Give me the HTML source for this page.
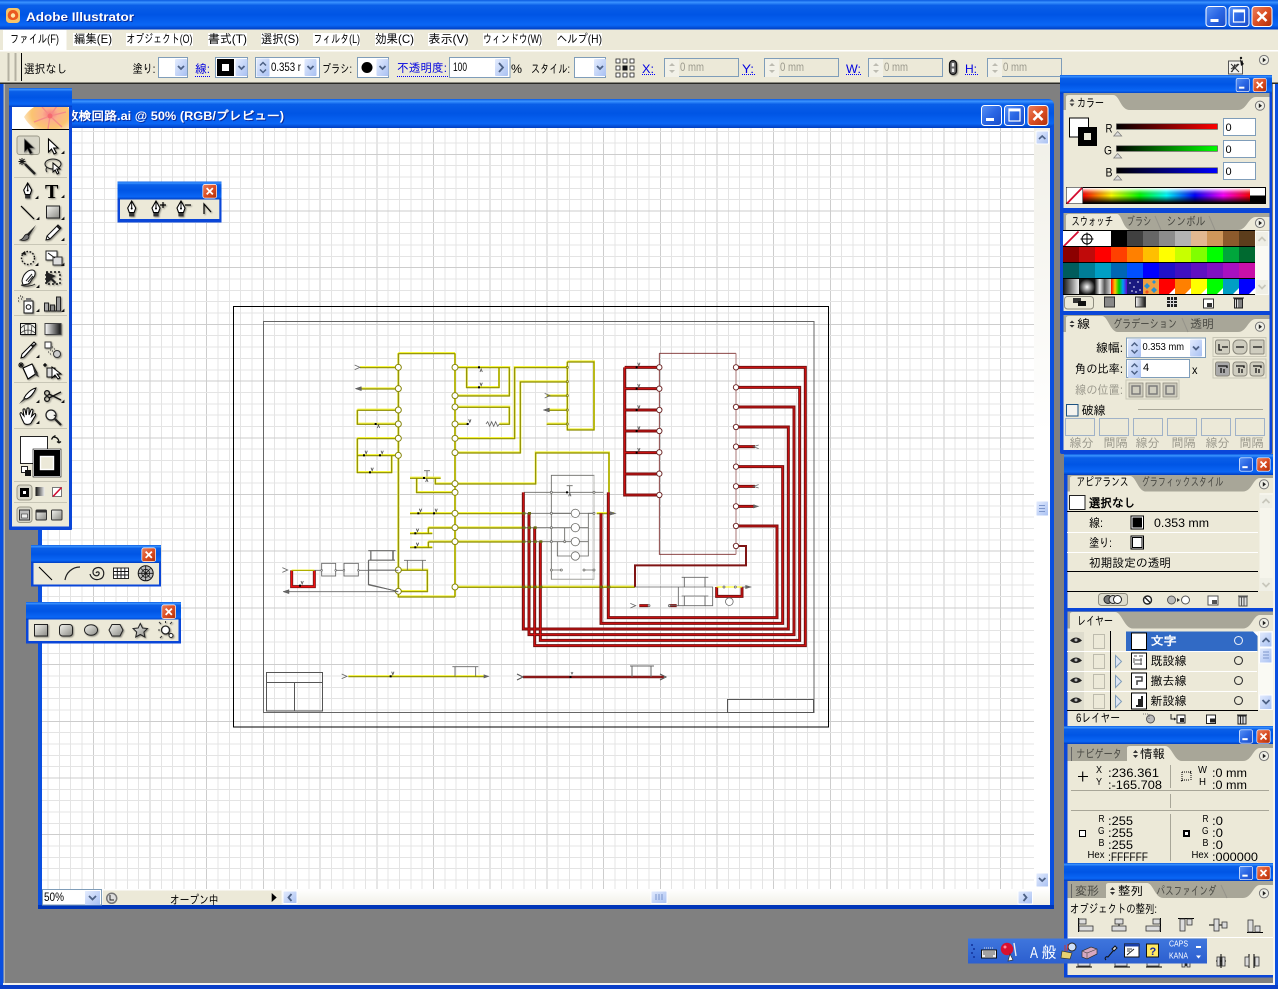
<!DOCTYPE html>
<html lang="ja"><head><meta charset="utf-8"><title>Adobe Illustrator</title>
<style>
html,body{margin:0;padding:0;background:#808080;overflow:hidden}
svg{display:block;position:absolute;left:0;top:0}
text{font-family:"Liberation Sans","IPAGothic","Noto Sans CJK JP",sans-serif;font-size:12px;fill:#000;white-space:pre}
.w{fill:#fff;font-weight:bold;filter:drop-shadow(1px 1px 0 #0a2a9a)}
.b{fill:#0000e0}
.g{fill:#9c9a8e}
.i{fill:#4a4a44}
.d{fill:#111}
.sh{filter:drop-shadow(1px 1px .7px rgba(0,0,0,.4))}
</style></head><body>
<svg width="1278" height="989" viewBox="0 0 1278 989" xmlns="http://www.w3.org/2000/svg">
<defs>
<linearGradient id="tb" x1="0" y1="0" x2="0" y2="1"><stop offset="0" stop-color="#0a5ae0"/><stop offset=".08" stop-color="#3a93ff"/><stop offset=".18" stop-color="#0a5fe8"/><stop offset=".5" stop-color="#0055e5"/><stop offset=".85" stop-color="#0a66f5"/><stop offset="1" stop-color="#003dc0"/></linearGradient>
<linearGradient id="cl" x1="0" y1="0" x2="1" y2="1"><stop offset="0" stop-color="#e9805e"/><stop offset=".5" stop-color="#dc4f24"/><stop offset="1" stop-color="#b02e08"/></linearGradient>
<linearGradient id="mn" x1="0" y1="0" x2="1" y2="1"><stop offset="0" stop-color="#5a93f5"/><stop offset=".5" stop-color="#2a66e4"/><stop offset="1" stop-color="#1a4cc8"/></linearGradient>
<linearGradient id="bb" x1="0" y1="0" x2="1" y2="1"><stop offset="0" stop-color="#e4ecfe"/><stop offset="1" stop-color="#a8c0f2"/></linearGradient>
<linearGradient id="gg" x1="0" y1="0" x2="1" y2="1"><stop offset="0" stop-color="#f4f4f0"/><stop offset="1" stop-color="#8a8a84"/></linearGradient>
<linearGradient id="gh" x1="0" y1="0" x2="1" y2="0"><stop offset="0" stop-color="#fff"/><stop offset="1" stop-color="#111"/></linearGradient>
<linearGradient id="st" x1="0" y1="0" x2="0" y2="1"><stop offset="0" stop-color="#fff"/><stop offset="1" stop-color="#f1f0e8"/></linearGradient>
<linearGradient id="sh" x1="0" y1="0" x2="0" y2="1"><stop offset="0" stop-color="#f1f0e8"/><stop offset=".4" stop-color="#fff"/></linearGradient>
<linearGradient id="rr" x1="0" x2="1"><stop offset="0" stop-color="#000"/><stop offset="1" stop-color="#f00"/></linearGradient>
<linearGradient id="rg" x1="0" x2="1"><stop offset="0" stop-color="#000"/><stop offset="1" stop-color="#0f0"/></linearGradient>
<linearGradient id="rb" x1="0" x2="1"><stop offset="0" stop-color="#000"/><stop offset="1" stop-color="#00f"/></linearGradient>
<linearGradient id="spec" x1="0" x2="1"><stop offset="0" stop-color="#f00"/><stop offset=".17" stop-color="#ff0"/><stop offset=".34" stop-color="#0f0"/><stop offset=".5" stop-color="#0ff"/><stop offset=".67" stop-color="#00f"/><stop offset=".84" stop-color="#f0f"/><stop offset="1" stop-color="#f00"/></linearGradient>
<linearGradient id="specv" x1="0" y1="0" x2="0" y2="1"><stop offset="0" stop-color="#fff"/><stop offset=".2" stop-color="#fff" stop-opacity=".4"/><stop offset=".5" stop-color="#000" stop-opacity="0"/><stop offset="1" stop-color="#000"/></linearGradient>
<linearGradient id="gs" x1="0" x2="1"><stop offset="0" stop-color="#111"/><stop offset="1" stop-color="#eee"/></linearGradient>
<radialGradient id="rgs"><stop offset="0" stop-color="#fff"/><stop offset="1" stop-color="#111"/></radialGradient>
<linearGradient id="met" x1="0" x2="1"><stop offset="0" stop-color="#222"/><stop offset=".3" stop-color="#eee"/><stop offset=".6" stop-color="#555"/><stop offset="1" stop-color="#ddd"/></linearGradient>
<linearGradient id="rain" x1="0" x2="1"><stop offset="0" stop-color="#f00"/><stop offset=".25" stop-color="#fc0"/><stop offset=".5" stop-color="#0c0"/><stop offset=".75" stop-color="#09f"/><stop offset="1" stop-color="#60c"/></linearGradient>
<radialGradient id="fl" cx=".55" cy=".45" r=".6"><stop offset="0" stop-color="#f77a80"/><stop offset=".28" stop-color="#fbb08c"/><stop offset=".65" stop-color="#fbc470"/><stop offset="1" stop-color="#fdebd0"/></radialGradient>
<linearGradient id="lang" x1="0" y1="0" x2="0" y2="1"><stop offset="0" stop-color="#3f76dd"/><stop offset="1" stop-color="#2c5fcf"/></linearGradient>
<clipPath id="cv"><rect x="42" y="128" width="992" height="761"/></clipPath>
<clipPath id="ban"><rect x="12" y="107" width="57" height="22"/></clipPath>

<symbol id="close" viewBox="0 0 21 21"><rect x=".5" y=".5" width="20" height="20" rx="3" fill="url(#cl)" stroke="#fff"/><path d="M6 6L15 15M15 6L6 15" stroke="#fff" stroke-width="2.6"/></symbol>
<symbol id="min" viewBox="0 0 21 21"><rect x=".5" y=".5" width="20" height="20" rx="3" fill="url(#mn)" stroke="#fff"/><rect x="5" y="13" width="8" height="3" fill="#fff"/></symbol>
<symbol id="max" viewBox="0 0 21 21"><rect x=".5" y=".5" width="20" height="20" rx="3" fill="url(#mn)" stroke="#fff"/><rect x="5" y="4" width="11" height="12" fill="none" stroke="#fff" stroke-width="1.2"/><rect x="5" y="4" width="11" height="2.4" fill="#fff"/></symbol>

<g id="dd"><rect width="12" height="17" rx="1" fill="url(#bb)"/><path d="M3 7l3 3 3-3" fill="none" stroke="#4d6185" stroke-width="1.8"/></g>
<g id="sp"><rect width="13" height="18" rx="1" fill="url(#bb)"/><path d="M3.5 7l3-3 3 3M3.5 11l3 3 3-3" fill="none" stroke="#4d6185" stroke-width="1.5"/></g>
<g id="spg"><rect width="14" height="18" fill="#f2f1e8"/><path d="M4 7l3-3 3 3zM4 11l3 3 3-3z" fill="#bdbcb2"/></g>
<g id="circ"><circle r="4.6" fill="#efefe6" stroke="#777"/><path d="M-1.2-2.4L2 0L-1.2 2.4z" fill="#222"/></g>
<path id="tri" d="M0 0h3.4v-3.4z" fill="#111"/>

<g id="pen"><path d="M0-8L4-1 2.4 3.5h-4.8L-4-1z" fill="#fff" stroke="#000" stroke-width="1.1"/><path d="M0-8V-1" stroke="#000"/><circle cy="-.5" r="1" fill="#000"/><rect x="-2.6" y="4" width="5.2" height="3.4" fill="#333"/></g>
<g id="sel"><path d="M-3.5-7V6l3-3 2.6 5 2.2-1.2-2.6-4.8H6z" fill="#000" stroke="#555" stroke-width=".6"/></g>
<g id="sel2"><path d="M-3.5-7V6l3-3 2.6 5 2.2-1.2-2.6-4.8H6z" fill="#fff" stroke="#000" stroke-width="1.1"/></g>
<g id="i-wand"><path d="M-2-2L8 8" stroke="#222" stroke-width="2.4"/><path d="M-5-8V-1M-8.5-4.5H-1.5M-7.5-7L-2.5-2M-2.5-7L-7.5-2" stroke="#111" stroke-width=".9"/></g>
<g id="i-lasso"><ellipse cx="0" cy="-2" rx="8" ry="5" fill="none" stroke="#222" stroke-width="1.1"/><path d="M-6 1q-2 3 0 5" fill="none" stroke="#222"/><path d="M0-3V6l2.2-2 2 4 1.6-1-2-4H7z" fill="#fff" stroke="#000"/></g>
<g id="i-brush"><path d="M8-8L-1 1 1 3z" fill="#222"/><path d="M-1 1C-5 2-3 5-8 7-3 8 1 7 1 3z" fill="#777" stroke="#111" stroke-width=".7"/></g>
<g id="i-pencil"><path d="M5-8L8-5-3 6-7 7-6 3z" fill="#fff" stroke="#111"/><path d="M-6 3L-3 6" stroke="#111"/><path d="M4-7L7-4" stroke="#111" stroke-width="1.6"/></g>
<g id="i-rot"><circle r="6.5" fill="none" stroke="#111" stroke-width="1.4" stroke-dasharray="1.6 1.6"/><path d="M-7-4L-3-7-2-3z" fill="#111"/></g>
<g id="i-scale"><rect x="-8" y="-7" width="11" height="9" fill="#fff" stroke="#222"/><rect x="-1" y="-1" width="9" height="8" fill="#ddd" stroke="#333"/><path d="M-6-5L1 0" stroke="#111"/></g>
<g id="i-warp"><path d="M-7 3C-6-4-1-8 3-8 7-8 7-3 4 0 1 3 2 5-1 6L-6 7z" fill="#fff" stroke="#111"/><path d="M-3 3L3-4M-1 4L4-2M-8 7C-3 9 3 8 6 6" fill="none" stroke="#222"/></g>
<g id="i-free"><rect x="-7" y="-6" width="14" height="12" fill="none" stroke="#111" stroke-width="1.4" stroke-dasharray="2 2"/><path d="M-7-6V6L-2 2 2 6 3 4-1 0 3-2z" fill="#222"/></g>
<g id="i-spray"><rect x="-4" y="-3" width="9" height="12" fill="#fff" stroke="#111"/><circle cx=".5" cy="3" r="2.3" fill="none" stroke="#111"/><rect x="-2" y="-6" width="5" height="3" fill="#777"/><path d="M-10-6h1M-8-8h1M-7-5h1M-10-3h1M-6-7h1" stroke="#111"/></g>
<g id="i-graph"><path d="M-8 7H8" stroke="#111"/><rect x="-8" y="-1" width="4" height="8" fill="#aaa" stroke="#222"/><rect x="-2" y="1" width="4" height="6" fill="#888" stroke="#222"/><rect x="4" y="-7" width="4" height="14" fill="#999" stroke="#222"/></g>
<g id="i-mesh"><rect x="-7.5" y="-5.5" width="15" height="11" fill="#f3f3ec" stroke="#111"/><path d="M-7-1C-3-6 3-6 7-1M-7 4C-3 0 3 0 7 4M0-5V5M-4-4L-3 5M4-4L3 5" fill="none" stroke="#333" stroke-width=".8"/></g>
<g id="i-grad"><rect x="-8" y="-5.5" width="16" height="11" fill="url(#gh)" stroke="#444"/></g>
<g id="i-eye"><path d="M6-8L8-6 5-3 3-5zM3-5L5-3-4 7-7 8-6 4z" fill="#fff" stroke="#000"/><path d="M3-5L8-6 5-3z" fill="#222"/></g>
<g id="i-blend"><rect x="-8" y="-8" width="6" height="6" fill="#fff" stroke="#333"/><circle cx="4" cy="4" r="3.5" fill="#ccc" stroke="#333"/><path d="M-3 0h1M-1-3h1M-1 1h1M1-1h1M-5 2h1M-3 4h1" stroke="#333"/></g>
<g id="i-bucket"><path d="M-5-3L4-7 9 2 0 8z" fill="#fff" stroke="#000" stroke-width="1.2"/><path d="M4-7L9 2 11 6 7 4z" fill="#333"/><path d="M-7-9V-3M-10-6H-4M-9-8L-5-4M-5-8L-9-4" stroke="#111"/></g>
<g id="i-lsel"><path d="M-6-3H2V6H-6z" fill="#ddd" stroke="#111"/><path d="M-1-4V7L2 4 5 8 7 7 4 3H8z" fill="#fff" stroke="#000"/><path d="M-8-8V-4M-10-6H-6M-9-7L-7-5M-7-7L-9-5" stroke="#111"/></g>
<g id="i-slice"><path d="M8-8C3-7-2-2-4 2L-2 3C2 2 6-3 8-8z" fill="#fff" stroke="#000"/><path d="M-4 2L-9 8-2 3z" fill="#333"/></g>
<g id="i-sci"><circle cx="-6" cy="-3" r="2.4" fill="none" stroke="#111" stroke-width="1.3"/><circle cx="-6" cy="3" r="2.4" fill="none" stroke="#111" stroke-width="1.3"/><path d="M-4-2L8 4M-4 2L8-4" stroke="#111" stroke-width="1.3"/></g>
<g id="i-hand"><path d="M-6 2L-8-3C-8-4.500-6.500-5-6-3.500L-4-1-5-7C-5-8.500-3-8.500-3-7L-1.800-2-1-8C-1-9.500 1-9.500 1-8L1-2 3-7C3.500-8.500 5-8 5-6.500L3.500-.5 6-3C7.500-4 8-3 7.500-1.500L3 6C2 7.500-3 8-4 6z" fill="#fff" stroke="#000"/></g>
<g id="i-zoom"><circle cx="-2" cy="-2" r="5" fill="#f4f4ee" stroke="#222" stroke-width="1.3"/><path d="M2-2L1.500-1M2 2L8 8" stroke="#222" stroke-width="2.2"/></g>

<g id="vt" stroke="#e4e4e4"><path d="M11.340 0V770M22.680 0V770M34.020 0V770M45.360 0V770"/><path d="M0 0V770" stroke="#cdcdcd"/></g>
<g id="ht" stroke="#e4e4e4"><path d="M0 11.340H1000M0 22.680H1000M0 34.020H1000M0 45.360H1000"/><path d="M0 0H1000" stroke="#cdcdcd"/></g>
<g id="sw"><rect x="-3" y="-3" width="6" height="6" fill="#000"/><path d="M3-14l3.500 9 3.500-9" fill="none" stroke="#555" stroke-width="2.500"/></g>
<g id="swu"><rect x="-3" y="-3" width="6" height="6" fill="#000"/><path d="M5 12l3.500-9 3.500 9" fill="none" stroke="#555" stroke-width="2.500"/></g>
<path id="tY" d="M0-7L16 0 0 7" fill="none" stroke="#666" stroke-width="2.400"/>
<path id="tA" d="M16-6L-2 0 16 6z" fill="#666" stroke="#555" stroke-width="1.500"/>

<path id="yp" fill="none" d="M175 40H345M175 40V770H345M345 40V770M60 82H175M60 146H175M52 210H175M52 210V252H175M52 295H175M52 295V397H155V346M52 346H175M345 82H508V167H345M380 82V142H477V82M345 201H508V252H478M383 252H345M345 295H524V82H682M345 338H541V125H682M682 65H762V269H682V65M620 167H682M620 210H682M620 252H682M345 431H587V338H807V457M345 457H230V414M210 414H302M345 431H286V414M210 520H552M265 563H552M265 563V580M210 580H277M265 605H552M265 605V622M210 622H277M345 741H885M770 520H822"/>
<path id="yp2" fill="none" d="M175 690H262V754H175"/>
<path id="rp" fill="none" d="M344 82H448M344 82V465H448M344 146H448M344 210H448M344 273H448M344 338H448M344 402H448M40 457V867H835V261H678M57 520V884H852V201H678M74 563V917H886V82H678M91 605V901H869V142H678M678 380H818V850H273V520M678 558H801V833H295V457M678 320H735M678 439H735M678 499H735M620 741V769H696V741M388 797H415M478 797H500"/>
</defs>

<!-- workspace -->
<rect width="1278" height="989" fill="#808080"/>
<rect x="0" y="0" width="3.500" height="989" fill="#0a4fe0"/>
<rect x="3.500" y="84" width="1.500" height="900" fill="#b8b5a8"/>
<rect x="1275" y="0" width="3" height="989" fill="#0a4fe0"/>
<rect x="1273" y="84" width="2" height="900" fill="#f4f3ee"/>
<rect x="3" y="983" width="1272" height="2" fill="#f4f3ee"/>
<rect x="0" y="985" width="1278" height="4" fill="#0a3fc8"/>

<!-- main title -->
<rect width="1278" height="29.500" fill="url(#tb)"/>
<g transform="translate(5 8)"><rect x="1" y="0" width="14" height="15" rx="3.500" fill="#f8c468"/><path d="M8 2C12 2 14 6 13 9 12 13 4 13 3 9 2 6 4 2 8 2z" fill="#ea5a20"/><circle cx="8" cy="7.500" r="2.200" fill="#ffe9a8"/></g>
<text class="w" x="26" y="21" textLength="108" lengthAdjust="spacingAndGlyphs" font-size="12">Adobe Illustrator</text>
<use href="#min" x="1205.500" y="6" width="21" height="21"/><use href="#max" x="1228.500" y="6" width="21" height="21"/><use href="#close" x="1251.500" y="6" width="21" height="21"/>

<!-- menu -->
<rect y="29.500" width="1278" height="20.500" x="0" fill="#ece9d8"/>
<g fill="#fff"><rect x="3" y="30" width="63.500" height="20"/><rect x="73" y="33" width="39" height="13"/><rect x="126" y="33" width="67" height="13"/><rect x="208" y="33" width="39" height="13"/><rect x="261" y="33" width="38" height="13"/><rect x="313" y="33" width="47" height="13"/><rect x="375" y="33" width="39" height="13"/><rect x="428" y="33" width="40" height="13"/><rect x="483" y="33" width="59" height="13"/><rect x="557" y="33" width="45" height="13"/></g>
<g>
<text x="10" y="43" textLength="49" lengthAdjust="spacingAndGlyphs">ファイル(F)</text>
<text x="74" y="43" textLength="38" lengthAdjust="spacingAndGlyphs">編集(E)</text>
<text x="126.500" y="43" textLength="66" lengthAdjust="spacingAndGlyphs">オブジェクト(O)</text>
<text x="208" y="43" textLength="39" lengthAdjust="spacingAndGlyphs">書式(T)</text>
<text x="261" y="43" textLength="38" lengthAdjust="spacingAndGlyphs">選択(S)</text>
<text x="313.500" y="43" textLength="46.500" lengthAdjust="spacingAndGlyphs">フィルタ(L)</text>
<text x="375" y="43" textLength="39" lengthAdjust="spacingAndGlyphs">効果(C)</text>
<text x="428.500" y="43" textLength="40" lengthAdjust="spacingAndGlyphs">表示(V)</text>
<text x="483" y="43" textLength="59" lengthAdjust="spacingAndGlyphs">ウィンドウ(W)</text>
<text x="557" y="43" textLength="45" lengthAdjust="spacingAndGlyphs">ヘルプ(H)</text>
</g>

<!-- control bar -->
<rect y="50" x="0" width="1278" height="1.500" fill="#fff"/>
<rect y="51.500" x="0" width="1278" height="31.500" fill="#ece9d8"/>
<rect y="82.500" x="0" width="1278" height="1.500" fill="#2a2a26"/>
<rect x="7.500" y="53" width="2" height="28" fill="#b4b1a2"/><rect x="14.500" y="53" width="2" height="28" fill="#b4b1a2"/><rect x="21" y="53" width="1" height="28" fill="#000"/>
<text x="24" y="73" textLength="43" lengthAdjust="spacingAndGlyphs">選択なし</text>
<text x="132.500" y="73" textLength="23" lengthAdjust="spacingAndGlyphs">塗り:</text>
<rect x="158.500" y="57.500" width="29" height="20" fill="#fff" stroke="#7f9db9"/><use href="#dd" x="175" y="59"/>
<text class="b" x="195" y="73" textLength="15" lengthAdjust="spacingAndGlyphs">線:</text><path d="M195 76.500h15" stroke="#00f" stroke-dasharray="1 1"/>
<rect x="215.500" y="57.500" width="32" height="20" fill="#fff" stroke="#7f9db9"/><rect x="217" y="59" width="17" height="17" fill="#000"/><rect x="222" y="64" width="7" height="7" fill="#fff"/><use href="#dd" x="235.500" y="59"/>
<rect x="255.500" y="57.500" width="64" height="20" fill="#fff" stroke="#7f9db9"/><use href="#sp" x="256.500" y="58.500"/><text x="271" y="71" textLength="30" lengthAdjust="spacingAndGlyphs" font-size="11">0.353 r</text><use href="#dd" x="304.500" y="59"/>
<text x="322" y="73" textLength="30" lengthAdjust="spacingAndGlyphs">ブラシ:</text>
<rect x="357.500" y="57.500" width="31" height="20" fill="#fff" stroke="#7f9db9"/><circle cx="367" cy="67.500" r="5.500" fill="#000"/><use href="#dd" x="376.500" y="59"/>
<text class="b" x="397" y="72" textLength="50" lengthAdjust="spacingAndGlyphs">不透明度:</text><path d="M397 76.500h51" stroke="#00f" stroke-dasharray="1 1"/>
<rect x="449.500" y="57.500" width="60.500" height="20" fill="#fff" stroke="#7f9db9"/><text x="453" y="71" textLength="14" lengthAdjust="spacingAndGlyphs" font-size="11">100</text>
<rect x="495" y="59" width="13" height="17" rx="1" fill="url(#bb)"/><path d="M499 63l4 4.500-4 4.500" fill="none" stroke="#4d6185" stroke-width="1.800"/>
<text x="511" y="73" textLength="11" lengthAdjust="spacingAndGlyphs">%</text>
<text x="531" y="73" textLength="39" lengthAdjust="spacingAndGlyphs">スタイル:</text>
<rect x="574.500" y="57.500" width="31" height="20" fill="#fff" stroke="#7f9db9"/><use href="#dd" x="594" y="59"/>
<g fill="#fff" stroke="#222" stroke-width=".8"><rect x="616" y="59" width="4" height="4"/><rect x="623" y="59" width="4" height="4"/><rect x="630" y="59" width="4" height="4"/><rect x="616" y="66" width="4" height="4"/><rect x="630" y="66" width="4" height="4"/><rect x="616" y="73" width="4" height="4"/><rect x="623" y="73" width="4" height="4"/><rect x="630" y="73" width="4" height="4"/></g><rect x="622.500" y="65.500" width="5" height="5" fill="#111"/>
<g>
<text class="b" x="642" y="73" textLength="12" lengthAdjust="spacingAndGlyphs">X:</text><path d="M642 74.500h13" stroke="#00f" stroke-dasharray="1 1"/>
<rect x="664.500" y="58.500" width="74" height="18" fill="#ece9d8" stroke="#7f9db9"/><use href="#spg" x="665" y="59"/><text class="g" x="680" y="71" textLength="24" lengthAdjust="spacingAndGlyphs" font-size="10">0 mm</text>
<text class="b" x="742" y="73" textLength="12" lengthAdjust="spacingAndGlyphs">Y:</text><path d="M742 74.500h13" stroke="#00f" stroke-dasharray="1 1"/>
<rect x="764.500" y="58.500" width="74" height="18" fill="#ece9d8" stroke="#7f9db9"/><use href="#spg" x="765" y="59"/><text class="g" x="780" y="71" textLength="24" lengthAdjust="spacingAndGlyphs" font-size="10">0 mm</text>
<text class="b" x="846" y="73" textLength="15" lengthAdjust="spacingAndGlyphs">W:</text><path d="M846 74.500h16" stroke="#00f" stroke-dasharray="1 1"/>
<rect x="868.500" y="58.500" width="74" height="18" fill="#ece9d8" stroke="#7f9db9"/><use href="#spg" x="869" y="59"/><text class="g" x="884" y="71" textLength="24" lengthAdjust="spacingAndGlyphs" font-size="10">0 mm</text>
<g class="sh"><rect x="949.500" y="60.500" width="7" height="14" rx="3.500" fill="#666" stroke="#111" stroke-width="1.200"/><rect x="951.800" y="63" width="2.400" height="3.500" fill="#eee"/><rect x="951.800" y="68.500" width="2.400" height="3.500" fill="#eee"/></g>
<text class="b" x="965" y="73" textLength="12" lengthAdjust="spacingAndGlyphs">H:</text><path d="M965 74.500h13" stroke="#00f" stroke-dasharray="1 1"/>
<rect x="987.500" y="58.500" width="74" height="18" fill="#ece9d8" stroke="#7f9db9"/><use href="#spg" x="988" y="59"/><text class="g" x="1003" y="71" textLength="24" lengthAdjust="spacingAndGlyphs" font-size="10">0 mm</text>
</g>
<g transform="translate(1236 67)"><rect x="-7.500" y="-6" width="14" height="13" fill="#f4f3ee" stroke="#555"/><path d="M-5-3L3 5M3-3L-5 5M-1-3L-4 5M-5 2L2-3" stroke="#333"/><path d="M4-8l4 5-3 2z" fill="#111"/><circle cx="5" cy="-9" r="1.200" fill="#111"/></g>
<use href="#circ" x="1264" y="60"/>

<!-- document window -->
<path d="M38 909V106Q38 99 45 99H1047Q1054 99 1054 106V909z" fill="#0a4fe0"/>
<rect x="38" y="99" width="1016" height="29" rx="6" fill="url(#tb)"/>
<rect x="38" y="905" width="1016" height="4" fill="#0036b8"/>
<rect x="42" y="128" width="1008" height="777" fill="#fff"/>
<g clip-path="url(#cv)" shape-rendering="crispEdges">
<use href="#vt" x="36.600" y="128"/><use href="#vt" x="93.300" y="128"/><use href="#vt" x="150" y="128"/><use href="#vt" x="206.700" y="128"/><use href="#vt" x="263.400" y="128"/><use href="#vt" x="320.100" y="128"/><use href="#vt" x="376.800" y="128"/><use href="#vt" x="433.500" y="128"/><use href="#vt" x="490.200" y="128"/><use href="#vt" x="546.900" y="128"/><use href="#vt" x="603.600" y="128"/><use href="#vt" x="660.300" y="128"/><use href="#vt" x="717" y="128"/><use href="#vt" x="773.700" y="128"/><use href="#vt" x="830.400" y="128"/><use href="#vt" x="887.100" y="128"/><use href="#vt" x="943.800" y="128"/><use href="#vt" x="1000.500" y="128"/>
<use href="#ht" x="42" y="97.600"/><use href="#ht" x="42" y="154.300"/><use href="#ht" x="42" y="211"/><use href="#ht" x="42" y="267.700"/><use href="#ht" x="42" y="324.400"/><use href="#ht" x="42" y="381.100"/><use href="#ht" x="42" y="437.800"/><use href="#ht" x="42" y="494.500"/><use href="#ht" x="42" y="551.200"/><use href="#ht" x="42" y="607.900"/><use href="#ht" x="42" y="664.600"/><use href="#ht" x="42" y="721.300"/><use href="#ht" x="42" y="778"/><use href="#ht" x="42" y="834.700"/>
</g>
<text class="w" x="66" y="120" textLength="218" lengthAdjust="spacingAndGlyphs" font-size="13">改検回路.ai @ 50% (RGB/プレビュー)</text>
<use href="#min" x="981" y="105" width="21" height="21"/><use href="#max" x="1004" y="105" width="21" height="21"/><use href="#close" x="1027.500" y="105" width="21" height="21"/>

<!-- drawing sheet -->
<rect x="233.500" y="306.500" width="595" height="420.500" fill="none" stroke="#000"/>
<rect x="263.500" y="321.500" width="550.500" height="391" fill="none" stroke="#666"/>
<g fill="none" stroke="#555"><rect x="266.500" y="672.500" width="56" height="38.500"/><path d="M266.500 682.500h56M294.500 682.500V711"/><rect x="727.500" y="699.500" width="86" height="13"/></g>

<!-- yellow schematic -->
<g transform="translate(340 340) scale(.33333)">
<use href="#yp" stroke="#f4f43a" stroke-width="6" transform="translate(0 -1)"/>
<use href="#yp" stroke="#8c8c00" stroke-width="3.400" transform="translate(0 1)"/>
<use href="#yp2" stroke="#f4f43a" stroke-width="6" transform="translate(0 -1)"/>
<use href="#yp2" stroke="#8c8c00" stroke-width="3.400" transform="translate(0 1)"/>
<g fill="none" stroke="#6a6a66" stroke-width="2.600">
<path d="M552 457H790M552 520H760M552 563H634M552 605H634M634 406H762V718H634zM85 735L175 754M85 661V735M85 661H165M85 690H175M92 632V661M158 632V661M85 632H165M202 661V690M248 661V690M192 661H258"/>
<path d="M762 520H745V648H718M718 563H745M718 605H745M634 520H694M652 605V648H694M652 605H694M674 563V605M634 563H694M634 605H652M634 690H664M732 690H762"/>
<path d="M680 437H698M689 437V455"/>
<path d="M252 392H270M261 392V410"/>
</g>
<g stroke="#b8b8b4" stroke-width="3" fill="none"><path d="M762 406V718H634"/></g>
<g fill="#fff" stroke="#6e6e6a" stroke-width="2.400"><circle cx="706" cy="520" r="12.500"/><circle cx="706" cy="563" r="12.500"/><circle cx="706" cy="605" r="12.500"/><circle cx="706" cy="648" r="12.500"/><circle cx="634" cy="457" r="3"/><circle cx="634" cy="520" r="3"/><circle cx="634" cy="563" r="3"/><circle cx="634" cy="605" r="3"/><circle cx="634" cy="690" r="3"/><circle cx="664" cy="690" r="3"/><circle cx="732" cy="690" r="3"/><circle cx="762" cy="690" r="3"/><circle cx="762" cy="457" r="3"/><circle cx="762" cy="520" r="3"/><circle cx="674" cy="605" r="3"/></g>
<use href="#sw" transform="translate(417 82) scale(1 -1)"/><use href="#sw" x="417" y="142"/><use href="#sw" x="383" y="252"/><use href="#swu" x="107" y="252"/><use href="#sw" x="72" y="346"/><use href="#sw" x="120" y="346"/><use href="#sw" x="90" y="397"/><use href="#sw" x="235" y="520"/><use href="#sw" x="282" y="520"/><use href="#sw" x="226" y="580"/><use href="#sw" x="226" y="622"/><use href="#swu" x="252" y="414"/><use href="#swu" x="681" y="457"/>
<use href="#tY" x="44" y="82"/><use href="#tA" x="48" y="146"/><use href="#tY" x="614" y="167"/><use href="#tA" x="612" y="210"/>
<path d="M438 252l5-7 6 14 6-14 6 14 6-14 6 14 5-7" fill="none" stroke="#666" stroke-width="2.400"/>
</g>

<!-- red schematic -->
<g transform="translate(510 340) scale(.33333)">
<path d="M448 40H678M448 40V643H678" fill="none" stroke="#7a2a2a" stroke-width="2.600"/>
<path d="M678 40V643" fill="none" stroke="#b58a8a" stroke-width="3.500"/>
<use href="#rp" stroke="#741212" stroke-width="9"/>
<use href="#rp" stroke="#e80f0f" stroke-width="2.600"/>
<path d="M678 618H708V676H375V741" fill="none" stroke="#801414" stroke-width="6"/>
<path d="M620 741H696" stroke="#ff0" stroke-width="3"/>
<g fill="none" stroke="#666" stroke-width="2.600"><path d="M375 741H608V797H478M505 741V797M523 712V742M585 712V742M523 768V797M585 768V797M515 712H595M515 768H595M696 741H722"/></g>
<g fill="#fff" stroke="#666" stroke-width="2.400"><circle cx="658" cy="785" r="11.500"/><circle cx="642" cy="741" r="3"/><circle cx="676" cy="741" r="3"/><circle cx="417" cy="797" r="3"/><circle cx="478" cy="797" r="3"/></g>
<use href="#tY" x="361" y="797"/><path d="M706 735L726 741 706 747z" fill="#666"/><path d="M300 514L320 520 300 526z" fill="#666"/>
<path d="M746 315L730 320 746 326M746 434L730 439 746 444" fill="none" stroke="#666" stroke-width="2.400"/><path d="M730 493L748 499 730 505z" fill="#666"/>
<g fill="#fff" stroke="#6a2222" stroke-width="2.800"><circle cx="448" cy="82" r="8"/><circle cx="448" cy="146" r="8"/><circle cx="448" cy="210" r="8"/><circle cx="448" cy="273" r="8"/><circle cx="448" cy="337" r="8"/><circle cx="448" cy="401" r="8"/><circle cx="448" cy="465" r="8"/><circle cx="678" cy="82" r="8"/><circle cx="678" cy="142" r="8"/><circle cx="678" cy="201" r="8"/><circle cx="678" cy="261" r="8"/><circle cx="678" cy="320" r="8"/><circle cx="678" cy="380" r="8"/><circle cx="678" cy="439" r="8"/><circle cx="678" cy="499" r="8"/><circle cx="678" cy="558" r="8"/><circle cx="678" cy="618" r="8"/></g>
<use href="#sw" x="380" y="82"/><use href="#sw" x="380" y="146"/><use href="#sw" x="380" y="210"/><use href="#sw" x="380" y="273"/><use href="#sw" x="380" y="338"/>
<g fill="#6a6a10"><rect x="37" y="516" width="9" height="8"/><rect x="54" y="516" width="9" height="8"/><rect x="37" y="559" width="9" height="8"/><rect x="54" y="559" width="9" height="8"/><rect x="71" y="559" width="9" height="8"/><rect x="37" y="601" width="9" height="8"/><rect x="54" y="601" width="9" height="8"/><rect x="71" y="601" width="9" height="8"/><rect x="88" y="601" width="9" height="8"/><rect x="37" y="737" width="9" height="8"/><rect x="54" y="737" width="9" height="8"/><rect x="71" y="737" width="9" height="8"/><rect x="88" y="737" width="9" height="8"/><rect x="270" y="737" width="9" height="8"/><rect x="292" y="737" width="9" height="8"/></g>
</g>

<g transform="translate(340 340) scale(.33333)" fill="#fff" stroke="#85850a" stroke-width="3"><circle cx="175" cy="82" r="9"/><circle cx="175" cy="146" r="9"/><circle cx="175" cy="210" r="9"/><circle cx="175" cy="252" r="9"/><circle cx="175" cy="295" r="9"/><circle cx="175" cy="346" r="9"/><circle cx="175" cy="690" r="9"/><circle cx="175" cy="754" r="9"/><circle cx="345" cy="82" r="9"/><circle cx="345" cy="167" r="9"/><circle cx="345" cy="201" r="9"/><circle cx="345" cy="252" r="9"/><circle cx="345" cy="295" r="9"/><circle cx="345" cy="338" r="9"/><circle cx="345" cy="431" r="9"/><circle cx="345" cy="457" r="9"/><circle cx="345" cy="520" r="9"/><circle cx="345" cy="563" r="9"/><circle cx="345" cy="605" r="9"/><circle cx="345" cy="741" r="9"/><circle cx="682" cy="82" r="3"/><circle cx="682" cy="125" r="3"/><circle cx="682" cy="167" r="3"/><circle cx="682" cy="210" r="3"/><circle cx="682" cy="252" r="3"/></g>

<!-- lower-left schematic -->
<g transform="translate(225 540) scale(.33333)">
<path d="M200 91V140H268V91" fill="none" stroke="#7a1414" stroke-width="9"/><path d="M200 91V140H268V91" fill="none" stroke="#ee0f0f" stroke-width="4"/>
<path d="M200 91H268" stroke="#e8e800" stroke-width="4"/><path d="M200 92H268" stroke="#8c8c00" stroke-width="2"/>
<g fill="none" stroke="#666" stroke-width="2.600"><path d="M190 155H520M268 91H290M332 91H357M400 91H520M431 60V133L520 155M431 60H510M438 32V60M505 32V60M430 32H512"/><rect x="290" y="70" width="42" height="38"/><rect x="357" y="70" width="43" height="38"/></g>
<use href="#tY" x="172" y="90"/><use href="#tA" x="176" y="155"/><use href="#sw" x="225" y="137"/>
<g fill="#fff" stroke="#666" stroke-width="2"><circle cx="290" cy="91" r="2.500"/><circle cx="332" cy="91" r="2.500"/><circle cx="357" cy="91" r="2.500"/><circle cx="400" cy="91" r="2.500"/></g>
<path d="M370 409H780" fill="none" stroke="#f4f43a" stroke-width="5" transform="translate(0 -1)"/><path d="M370 409H780" fill="none" stroke="#8c8c00" stroke-width="3.400" transform="translate(0 1)"/>
<path d="M682 380H760M690 380V409M752 380V409" fill="none" stroke="#666" stroke-width="2.600"/>
<use href="#tY" x="350" y="409"/><path d="M776 403L794 409 776 415z" fill="#666"/><use href="#sw" x="497" y="409"/>
</g>
<path d="M523 677H664" stroke="#6a1414" stroke-width="2.400"/><path d="M523 677H664" stroke="#c02020" stroke-width=".8"/>
<path d="M517 674l6 3-6 3M660 674l6 3-6 3" fill="none" stroke="#555"/>
<path d="M630 666H654M632 666V677M651 666V677" fill="none" stroke="#666"/><rect x="569.500" y="676" width="2" height="2" fill="#000"/><path d="M571 672l1 2 1-2" fill="none" stroke="#555" stroke-width=".8"/>

<!-- scrollbars + status -->
<rect x="1034" y="128" width="16" height="761" fill="url(#sh)"/>
<rect x="42" y="889" width="1008" height="16" fill="url(#st)"/>
<rect x="1036" y="131" width="12.500" height="13" rx="1" fill="url(#bb)" stroke="#fff"/><path d="M1039 139l3.200-3 3.200 3" fill="none" stroke="#4d6185" stroke-width="1.600"/>
<rect x="1036" y="873" width="12.500" height="14" rx="1" fill="url(#bb)" stroke="#fff"/><path d="M1039 878l3.200 3 3.200-3" fill="none" stroke="#4d6185" stroke-width="1.800"/>
<rect x="1036" y="501" width="12.500" height="15" rx="1" fill="url(#bb)" stroke="#fff"/><path d="M1039 505.500h6M1039 508.500h6M1039 511.500h6" stroke="#7c96cc"/>
<rect x="1018" y="891" width="14.500" height="13" rx="1" fill="url(#bb)" stroke="#fff"/><path d="M1023.500 894l3 3.500-3 3.500" fill="none" stroke="#4d6185" stroke-width="1.800"/>
<rect x="283" y="891" width="14" height="12.500" rx="1" fill="url(#bb)" stroke="#fff"/><path d="M291.500 894l-3 3.500 3 3.500" fill="none" stroke="#4d6185" stroke-width="1.800"/>
<rect x="651" y="891" width="16" height="12.500" rx="1" fill="url(#bb)" stroke="#fff"/><path d="M656 894v6M659 894v6M662 894v6" stroke="#7c96cc"/>
<rect x="42.500" y="889.500" width="59" height="15.500" fill="#fff" stroke="#7f9db9"/><text x="44" y="901" textLength="20" lengthAdjust="spacingAndGlyphs" font-size="11">50%</text>
<rect x="85" y="891" width="15" height="14" fill="url(#bb)"/><path d="M89 896l3.500 3.500 3.500-3.500" fill="none" stroke="#4d6185" stroke-width="1.800"/>
<rect x="103" y="890.500" width="178.500" height="14.500" fill="#ece9d8"/>
<circle cx="111.700" cy="898.300" r="5" fill="#ddd" stroke="#777" stroke-width="1.500"/><path d="M110 895v5h4" fill="none" stroke="#222"/>
<text x="170" y="904" textLength="48.500" lengthAdjust="spacingAndGlyphs">オープン中</text>
<path d="M271.700 893l5 4.500-5 4.500z" fill="#000"/>

<!-- toolbox -->
<rect x="9" y="88" width="63" height="442" fill="#0a46d8" rx="1"/>
<rect x="9" y="88" width="63" height="19" fill="url(#tb)"/>
<rect x="12" y="107" width="57" height="22" fill="#fff"/>
<g clip-path="url(#ban)"><path d="M24 117C30 108 36 106 40 104L50 98 62 102C72 106 74 122 68 130L56 134 42 132C34 130 28 124 24 117z" fill="url(#fl)"/><path d="M50 116L42 107M50 116L57 106M50 116L66 112M50 116L62 127M50 116L48 129M50 116L34 122" stroke="#f58a88" stroke-width="1.300"/><circle cx="50" cy="116" r="2.500" fill="#f66a70"/></g>
<rect x="12" y="129" width="57" height="1" fill="#000"/>
<rect x="12" y="130" width="57" height="396.500" fill="#ece9d8"/>
<g fill="#c8c6b6"><rect x="14" y="177" width="53" height="1"/><rect x="14" y="244" width="53" height="1"/><rect x="14" y="290" width="53" height="1"/><rect x="14" y="315" width="53" height="1"/><rect x="14" y="382" width="53" height="1"/><rect x="14" y="428" width="53" height="1"/><rect x="14" y="481" width="53" height="1"/><rect x="14" y="502" width="53" height="1"/></g>
<rect x="17" y="136" width="22.500" height="18.500" rx="2.500" fill="#d8d6c8" stroke="#9a9888"/>
<g class="sh">
<use href="#sel" x="28" y="146"/><use href="#sel2" x="52" y="146"/>
<use href="#i-wand" x="27" y="166"/><use href="#i-lasso" x="53" y="166"/>
<use href="#pen" x="27.700" y="191"/><text x="45" y="198" style="font-family:'Liberation Serif',serif;font-size:20px;font-weight:bold">T</text>
<path d="M21 206L34 219" stroke="#000" stroke-width="1.200"/><rect x="46.500" y="206" width="13" height="12" fill="url(#gg)" stroke="#222"/>
<use href="#i-brush" x="28" y="233"/><use href="#i-pencil" x="53" y="233"/>
<use href="#i-rot" x="28" y="258"/><use href="#i-scale" x="54" y="258"/>
<use href="#i-warp" x="29" y="278"/><use href="#i-free" x="53" y="278"/>
<use href="#i-spray" x="28" y="304"/><use href="#i-graph" x="52.500" y="304"/>
<use href="#i-mesh" x="28" y="329"/><use href="#i-grad" x="53" y="329"/>
<use href="#i-eye" x="28" y="350"/><use href="#i-blend" x="53" y="350"/>
<use href="#i-bucket" x="28" y="371"/><use href="#i-lsel" x="53" y="371"/>
<use href="#i-slice" x="28" y="396"/><use href="#i-sci" x="53" y="396"/>
<use href="#i-hand" x="28" y="417"/><use href="#i-zoom" x="53" y="417"/>
</g>
<use href="#tri" x="61" y="154"/><use href="#tri" x="61" y="198"/><use href="#tri" x="35" y="199"/><use href="#tri" x="36" y="220"/><use href="#tri" x="61" y="220"/><use href="#tri" x="61" y="241"/><use href="#tri" x="35" y="266"/><use href="#tri" x="61" y="266"/><use href="#tri" x="36" y="288"/><use href="#tri" x="36" y="312"/><use href="#tri" x="61" y="312"/><use href="#tri" x="36" y="358"/><use href="#tri" x="36" y="403"/><use href="#tri" x="61" y="403"/><use href="#tri" x="36" y="424"/>
<rect x="20.500" y="436.500" width="27" height="27" fill="#fff" stroke="#222"/>
<rect x="33.500" y="449.500" width="27" height="27" fill="#000" stroke="#fff" stroke-width="1"/><rect x="33" y="449" width="28" height="28" fill="none" stroke="#000" stroke-width=".6"/><rect x="40.500" y="456.500" width="13" height="13" fill="#ece9d8" stroke="#fff" stroke-width="1.400"/>
<path d="M53 437l-1.500 2.500M53 437q6 0 6 6M59 443l-2-1.500M59 443l2-1.500M53 437l2.500-1.500" fill="none" stroke="#111" stroke-width="1.300"/>
<rect x="21.500" y="466.500" width="6" height="6" fill="#fff" stroke="#222"/><rect x="25" y="470" width="6" height="6" fill="#111"/>
<rect x="17" y="485" width="15" height="15" rx="3" fill="#d8d6c8" stroke="#9a9888"/><rect x="20" y="488" width="9" height="9" fill="#000"/><rect x="23" y="491" width="3" height="3" fill="#fff"/>
<rect x="35.500" y="487" width="9" height="9" fill="url(#gs)"/>
<rect x="52.500" y="487.500" width="9" height="9" fill="#fff" stroke="#777"/><path d="M53 496.500L61.500 487.500" stroke="#d40c30" stroke-width="1.600"/>
<rect x="17" y="507" width="15" height="15.500" rx="3" fill="#d8d6c8" stroke="#9a9888"/><rect x="19.500" y="510" width="10" height="10" fill="#bbb" stroke="#333"/><rect x="21.500" y="514" width="6" height="4" fill="#eee" stroke="#333" stroke-width=".6"/>
<rect x="36" y="510" width="10.500" height="10" rx="1" fill="url(#gg)" stroke="#333"/><rect x="36" y="510" width="10.500" height="2.500" fill="#333"/>
<rect x="51.500" y="510" width="10.500" height="10" rx="1" fill="url(#gg)" stroke="#333"/>

<!-- pen palette -->
<rect x="117.500" y="181.500" width="104" height="41" fill="#0a46d8"/><rect x="117.500" y="181.500" width="104" height="18" fill="url(#tb)"/><rect x="120" y="199.500" width="99.300" height="19.500" fill="#ece9d8"/>
<use href="#close" x="202.500" y="184" width="14.500" height="14.500"/>
<g class="sh"><use href="#pen" x="131.700" y="209"/><use href="#pen" x="156" y="209"/><path d="M160 205h6M163 202v6" stroke="#000" stroke-width="1.200"/><use href="#pen" x="181" y="209"/><path d="M185 205h6" stroke="#000" stroke-width="1.200"/>
<path d="M204 214V204L211 212" fill="none" stroke="#000" stroke-width="1.200"/></g>

<!-- line palette -->
<rect x="31" y="545" width="130" height="41.500" fill="#0a46d8"/><rect x="31" y="545" width="130" height="18" fill="url(#tb)"/><rect x="33.500" y="563" width="125.500" height="21.500" fill="#ece9d8"/>
<use href="#close" x="141.500" y="547.500" width="14.500" height="14.500"/>
<path d="M39 567L52 580" stroke="#000" stroke-width="1.100"/>
<path d="M65 580C66 573 72 567 80 567" fill="none" stroke="#222" stroke-width="1.200"/>
<path d="M96 573c1-2 4-1 3 1-1 3-6 2-6-2 0-4 6-6 9-3 3 3 2 9-2 10-5 2-9-1-10-5" fill="none" stroke="#222" stroke-width="1.200"/>
<g stroke="#111" stroke-width=".9" fill="#fff"><rect x="113.500" y="568" width="15" height="10.500"/><path d="M113.500 571.500h15M113.500 575h15M117.300 568v10.500M121 568v10.500M124.800 568v10.500" fill="none"/></g>
<circle cx="145.700" cy="573.300" r="7.500" fill="#bbb" stroke="#111"/><path d="M138.500 573.300h14.500M145.700 566v14.500M141 568.500l9.500 9.500M150.500 568.500L141 578" stroke="#111" stroke-width=".8"/><circle cx="145.700" cy="573.300" r="4" fill="none" stroke="#111" stroke-width=".8"/>

<!-- shape palette -->
<rect x="26" y="602" width="155" height="41.500" fill="#0a46d8"/><rect x="26" y="602" width="155" height="18" fill="url(#tb)"/><rect x="28.500" y="619.500" width="150" height="21.500" fill="#ece9d8"/>
<use href="#close" x="161.500" y="604.500" width="14.500" height="14.500"/>
<g class="sh">
<rect x="34.500" y="624.500" width="13" height="11.500" fill="url(#gg)" stroke="#222"/>
<rect x="59.500" y="624.500" width="13" height="11.500" rx="3" fill="url(#gg)" stroke="#222"/>
<ellipse cx="91" cy="630" rx="6.500" ry="5.300" fill="url(#gg)" stroke="#222"/>
<path d="M112 624.500h8l3 5.500-3 6h-8l-3-6z" fill="url(#gg)" stroke="#222"/>
<path d="M140.300 623.500l2.200 4.500 5 .5-3.600 3.500 1 5-4.600-2.500-4.600 2.500 1-5-3.600-3.500 5-.5z" fill="url(#gg)" stroke="#222"/>
<circle cx="165.500" cy="630" r="4" fill="#fff" stroke="#222" stroke-width="1.300"/><path d="M168 633l3 3" stroke="#222" stroke-width="1.300"/><path d="M159 622l2 2M172 622l-2 2M165.500 621v2M158 630h2M160 638l2-2" stroke="#333"/><circle cx="171" cy="635.500" r="2" fill="#fff" stroke="#222"/>
</g>

<!-- right panel A -->
<rect x="1060" y="75" width="212" height="379" fill="#0a46d8" rx="2"/>
<rect x="1060" y="75" width="212" height="18.500" fill="url(#tb)"/>
<use href="#min" x="1235.700" y="78" width="14" height="14"/><use href="#close" x="1252.700" y="78" width="14" height="14"/>
<rect x="1063.500" y="93" width="206" height="115" fill="#ece9d8"/><rect x="1063.500" y="93" width="206" height="17" fill="#a8a698"/>
<path d="M1066 110V97Q1066 95 1069 95H1113C1120 95 1120 110 1130 110z" fill="#ece9d8"/>
<path d="M1238 110C1247 110 1248 97 1256 97H1269.500V110z" fill="#ece9d8"/>
<path d="M1069.500 101.500L1072 98.500 1074.500 101.500zM1069.500 103.500L1072 106.500 1074.500 103.500z" fill="#444"/>
<text x="1077" y="107" textLength="27" lengthAdjust="spacingAndGlyphs">カラー</text>
<use href="#circ" x="1260" y="105.700"/>
<rect x="1069.500" y="118" width="19" height="19" fill="#fff" stroke="#000"/><rect x="1078" y="127" width="19" height="19" fill="#000"/><rect x="1084" y="133" width="7" height="7" fill="#ece9d8"/>
<text x="1105.500" y="132.500" textLength="7" lengthAdjust="spacingAndGlyphs">R</text><text x="1104" y="154.500" textLength="8" lengthAdjust="spacingAndGlyphs">G</text><text x="1105.500" y="176.500" textLength="7" lengthAdjust="spacingAndGlyphs">B</text>
<rect x="1116.500" y="123.800" width="101" height="5.500" fill="url(#rr)" stroke="#444" stroke-width=".6"/><rect x="1116.500" y="145.800" width="101" height="5.500" fill="url(#rg)" stroke="#444" stroke-width=".6"/><rect x="1116.500" y="167.800" width="101" height="5.500" fill="url(#rb)" stroke="#444" stroke-width=".6"/>
<path d="M1117.700 131.500l4 4.500h-8zM1117.700 153.500l4 4.500h-8zM1117.700 175.500l4 4.500h-8z" fill="#ddd" stroke="#777" stroke-width=".7"/>
<g fill="#fff" stroke="#7f9db9"><rect x="1223.500" y="118.500" width="32" height="17"/><rect x="1223.500" y="140.500" width="32" height="17"/><rect x="1223.500" y="162.500" width="32" height="17"/></g>
<text x="1225.500" y="131" style="font-size:11px">0</text><text x="1225.500" y="153" style="font-size:11px">0</text><text x="1225.500" y="175" style="font-size:11px">0</text>
<rect x="1066" y="187" width="200" height="17" fill="#000"/>
<rect x="1066.500" y="187.500" width="16" height="16" fill="#fff"/><path d="M1067 203.500L1082 188" stroke="#d40c30" stroke-width="1.800"/>
<rect x="1083" y="188" width="167" height="15" fill="url(#spec)"/><rect x="1083" y="188" width="167" height="15" fill="url(#specv)"/>
<rect x="1250" y="188" width="15" height="7.500" fill="#fff"/>

<!-- swatches -->
<rect x="1063.500" y="213" width="206" height="98" fill="#ece9d8"/><rect x="1063.500" y="213" width="206" height="17.500" fill="#a8a698"/>
<path d="M1066 230V216Q1066 214 1069 214H1117C1122 214 1123 230 1131 230z" fill="#ece9d8"/>
<path d="M1238 230C1247 230 1248 217 1256 217H1269.500V230z" fill="#ece9d8"/>
<text x="1071.500" y="225.500" textLength="41.500" lengthAdjust="spacingAndGlyphs">スウォッチ</text>
<text class="i" x="1126.500" y="225.500" textLength="25" lengthAdjust="spacingAndGlyphs">ブラシ</text><text class="i" x="1166.500" y="225.500" textLength="39" lengthAdjust="spacingAndGlyphs">シンボル</text>
<path d="M1155 216l6 14M1209 216l6 14" stroke="#95938a"/>
<use href="#circ" x="1260" y="223"/>
<g shape-rendering="crispEdges">
<rect x="1063" y="231" width="192" height="64" fill="#fff"/>
<rect x="1079" y="231" width="16" height="16" fill="#fff"/>
<rect x="1111" y="231" width="16" height="16" fill="#000"/><rect x="1127" y="231" width="16" height="16" fill="#404040"/><rect x="1143" y="231" width="16" height="16" fill="#666"/><rect x="1159" y="231" width="16" height="16" fill="#8c8c8c"/><rect x="1175" y="231" width="16" height="16" fill="#b3b3b3"/><rect x="1191" y="231" width="16" height="16" fill="#e2b890"/><rect x="1207" y="231" width="16" height="16" fill="#cf975a"/><rect x="1223" y="231" width="16" height="16" fill="#8c5a2c"/><rect x="1239" y="231" width="16" height="16" fill="#5c3d1c"/>
<rect x="1063" y="247" width="16" height="16" fill="#8c0000"/><rect x="1079" y="247" width="16" height="16" fill="#c00a0a"/><rect x="1095" y="247" width="16" height="16" fill="#f00"/><rect x="1111" y="247" width="16" height="16" fill="#ff4000"/><rect x="1127" y="247" width="16" height="16" fill="#ff8000"/><rect x="1143" y="247" width="16" height="16" fill="#ffbf00"/><rect x="1159" y="247" width="16" height="16" fill="#ff0"/><rect x="1175" y="247" width="16" height="16" fill="#c8ff00"/><rect x="1191" y="247" width="16" height="16" fill="#80ff00"/><rect x="1207" y="247" width="16" height="16" fill="#0f0"/><rect x="1223" y="247" width="16" height="16" fill="#00a63c"/><rect x="1239" y="247" width="16" height="16" fill="#006a30"/>
<rect x="1063" y="263" width="16" height="16" fill="#005c5c"/><rect x="1079" y="263" width="16" height="16" fill="#007d96"/><rect x="1095" y="263" width="16" height="16" fill="#009fc4"/><rect x="1111" y="263" width="16" height="16" fill="#0066b3"/><rect x="1127" y="263" width="16" height="16" fill="#0050ff"/><rect x="1143" y="263" width="16" height="16" fill="#00f"/><rect x="1159" y="263" width="16" height="16" fill="#2010c8"/><rect x="1175" y="263" width="16" height="16" fill="#3f10c0"/><rect x="1191" y="263" width="16" height="16" fill="#6010c0"/><rect x="1207" y="263" width="16" height="16" fill="#8010c0"/><rect x="1223" y="263" width="16" height="16" fill="#a810c0"/><rect x="1239" y="263" width="16" height="16" fill="#c810a8"/>
<rect x="1063" y="279" width="16" height="16" fill="url(#gs)"/><rect x="1079" y="279" width="16" height="16" fill="url(#rgs)"/><rect x="1095" y="279" width="16" height="16" fill="url(#met)"/><rect x="1111" y="279" width="16" height="16" fill="url(#rain)"/><rect x="1127" y="279" width="16" height="16" fill="#1a1a80"/><rect x="1143" y="279" width="16" height="16" fill="#f0a040"/>
<rect x="1159" y="279" width="16" height="16" fill="#f00"/><rect x="1175" y="279" width="16" height="16" fill="#ff8000"/><rect x="1191" y="279" width="16" height="16" fill="#ff0"/><rect x="1207" y="279" width="16" height="16" fill="#0f0"/><rect x="1223" y="279" width="16" height="16" fill="#009fc4"/><rect x="1239" y="279" width="16" height="16" fill="#00f"/>
</g>
<path d="M1175 295l-7 0 7-7zM1191 295h-7l7-7zM1207 295h-7l7-7zM1223 295h-7l7-7zM1239 295h-7l7-7zM1255 295h-7l7-7z" fill="#fff"/>
<path d="M1063.500 246.500L1078.500 231.500" stroke="#d40c30" stroke-width="1.800"/>
<circle cx="1087" cy="239" r="5" fill="#fff" stroke="#000"/><path d="M1080.500 239h13M1087 232.500v13" stroke="#000"/>
<path d="M1129 283h2M1133 287h2M1137 282h2M1131 291h2M1139 290h2M1135 292h2" stroke="#e8e8ff"/><path d="M1147 283l3 3-3 3-3-3zM1154 287l3 3-3 3-3-3zM1154 280l2 2-2 2-2-2z" fill="#2a90d0"/><path d="M1147 290l2 2-2 2-2-2z" fill="#ee5020"/>
<g stroke="#000" fill="none" shape-rendering="crispEdges"><path d="M1063 230.500h192M1063 246.500h192M1063 262.500h192M1063 278.500h192M1063 294.500h192"/></g>
<rect x="1255" y="231" width="14" height="64" fill="#fafaf4"/>
<rect x="1256" y="232" width="12" height="14" fill="#efefe6"/><path d="M1258.500 241l3.500-3.500 3.500 3.500" fill="none" stroke="#c8c7bc" stroke-width="1.800"/>
<rect x="1256" y="280" width="12" height="14" fill="#efefe6"/><path d="M1258.500 285l3.500 3.500 3.500-3.500" fill="none" stroke="#c8c7bc" stroke-width="1.800"/>
<rect x="1064.500" y="296.500" width="29" height="12.500" rx="3" fill="#ece9d8" stroke="#8f8d80"/>
<rect x="1073" y="298" width="8" height="5" fill="#333"/><rect x="1078" y="301" width="8" height="5" fill="#111"/>
<rect x="1104.500" y="297" width="10" height="10" fill="#888" stroke="#333"/>
<rect x="1135.500" y="297" width="10" height="10" fill="url(#gh)" stroke="#333"/>
<g fill="#222"><rect x="1167" y="297" width="10" height="10"/></g><path d="M1170.500 297v10M1173.500 297v10M1167 300.500h10M1167 303.500h10" stroke="#ddd"/>
<rect x="1203.500" y="299" width="10" height="9" fill="#fff" stroke="#333"/><rect x="1207" y="303" width="5" height="4" fill="#333"/>
<g><rect x="1234.500" y="299" width="8" height="9" fill="#ddd" stroke="#222"/><path d="M1233 298h11M1236.500 299v9M1239 299v9M1241 299v9" stroke="#222"/></g>

<!-- stroke -->
<rect x="1063.500" y="315" width="206" height="135" fill="#ece9d8"/><rect x="1063.500" y="315" width="206" height="17" fill="#a8a698"/>
<path d="M1066 332V318Q1066 316 1069 316H1102C1108 316 1110 332 1118 332z" fill="#ece9d8"/>
<path d="M1238 332C1247 332 1248 319 1256 319H1269.500V332z" fill="#ece9d8"/>
<path d="M1069.500 323L1072 320.500 1074.500 323zM1069.500 325L1072 327.500 1074.500 325z" fill="#333"/>
<text x="1077" y="328" textLength="13" lengthAdjust="spacingAndGlyphs">線</text>
<text class="i" x="1113" y="328" textLength="64" lengthAdjust="spacingAndGlyphs">グラデーション</text><text class="i" x="1190" y="328" textLength="24" lengthAdjust="spacingAndGlyphs">透明</text>
<path d="M1182 318l6 14" stroke="#95938a"/>
<use href="#circ" x="1260" y="326.700"/>
<text x="1096" y="352" textLength="27" lengthAdjust="spacingAndGlyphs">線幅:</text>
<rect x="1126.500" y="338" width="79" height="19.500" fill="#fff" stroke="#7f9db9"/><use href="#sp" x="1128" y="339"/><text x="1142.500" y="350" textLength="41.500" lengthAdjust="spacingAndGlyphs" style="font-size:10px">0.353 mm</text><use href="#dd" x="1190" y="339.500"/>
<text x="1075" y="373" textLength="48" lengthAdjust="spacingAndGlyphs">角の比率:</text>
<rect x="1126.500" y="359.500" width="63" height="18" fill="#fff" stroke="#7f9db9"/><use href="#sp" x="1128" y="360"/><text x="1143" y="371" style="font-size:11px">4</text>
<text x="1192" y="374" textLength="5.500" lengthAdjust="spacingAndGlyphs">x</text>
<rect x="1213" y="337.500" width="53" height="19" fill="none" stroke="#c8c6b6"/><rect x="1213" y="359" width="53" height="19" fill="none" stroke="#c8c6b6"/>
<g fill="#cfcdbf" stroke="#8a887c"><rect x="1215.500" y="340" width="14" height="14" rx="2"/><rect x="1233" y="340" width="14" height="14" rx="5"/><rect x="1250" y="340" width="14" height="14" rx="1"/><rect x="1215.500" y="362" width="14" height="14" rx="2" fill="#aaa"/><rect x="1233" y="362" width="14" height="14" rx="3"/><rect x="1250" y="362" width="14" height="14" rx="3"/></g>
<g stroke="#111" stroke-width="1.300" fill="none"><path d="M1219 344v6h3m0-3h6M1236 347h8M1253 347h9M1218 366h9v2m-6 0v5m3-4v4M1236 366h8v2m-5 0v5m3-4v4M1253 366h8v2m-5 0v5m3-4v4"/></g>
<text class="g" x="1075" y="394" textLength="48" lengthAdjust="spacingAndGlyphs">線の位置:</text>
<rect x="1126" y="380" width="53" height="19" fill="none" stroke="#c8c6b6"/>
<g fill="#cfcdbf" stroke="#8a887c" stroke-width=".8"><rect x="1129" y="383" width="14" height="14"/><rect x="1146" y="383" width="14" height="14"/><rect x="1163" y="383" width="14" height="14"/></g>
<g fill="none" stroke="#777" stroke-width="1.400"><rect x="1132" y="386" width="8" height="8"/><rect x="1149" y="386" width="8" height="8"/><rect x="1166" y="386" width="8" height="8"/></g>
<rect x="1066.500" y="404.500" width="11.500" height="11.500" fill="#f4f3ee" stroke="#1c5180"/>
<text x="1081.500" y="414.500" textLength="24" lengthAdjust="spacingAndGlyphs">破線</text>
<path d="M1138 409.500h125" stroke="#a8a698"/>
<g fill="none" stroke="#a0b2c8"><rect x="1065.500" y="418.500" width="29" height="17"/><rect x="1099.500" y="418.500" width="29" height="17"/><rect x="1133.500" y="418.500" width="29" height="17"/><rect x="1167.500" y="418.500" width="29" height="17"/><rect x="1201.500" y="418.500" width="29" height="17"/><rect x="1235.500" y="418.500" width="29" height="17"/></g>
<text class="g" x="1069.500" y="447" textLength="24" lengthAdjust="spacingAndGlyphs">線分</text><text class="g" x="1103.500" y="447" textLength="24" lengthAdjust="spacingAndGlyphs">間隔</text><text class="g" x="1135.500" y="447" textLength="24" lengthAdjust="spacingAndGlyphs">線分</text><text class="g" x="1171.500" y="447" textLength="24" lengthAdjust="spacingAndGlyphs">間隔</text><text class="g" x="1205.500" y="447" textLength="24" lengthAdjust="spacingAndGlyphs">線分</text><text class="g" x="1239.500" y="447" textLength="24" lengthAdjust="spacingAndGlyphs">間隔</text>

<!-- right panel B -->
<rect x="1064" y="454" width="209" height="523.500" fill="#0a46d8"/>
<rect x="1064" y="454" width="209" height="21" fill="url(#tb)"/>
<use href="#min" x="1239" y="457.500" width="14" height="14"/><use href="#close" x="1256.500" y="457.500" width="14" height="14"/>
<rect x="1067.500" y="475" width="205.500" height="133" fill="#ece9d8"/><rect x="1067.500" y="475" width="205.500" height="16.500" fill="#a8a698"/>
<path d="M1070 491.500V478Q1070 476 1073 476H1130C1136 476 1138 491.500 1146 491.500z" fill="#ece9d8"/>
<path d="M1243 491.500C1252 491.500 1253 478 1260 478H1273V491.500z" fill="#ece9d8"/>
<text x="1076.500" y="486" textLength="52" lengthAdjust="spacingAndGlyphs">アピアランス</text>
<text class="i" x="1141.500" y="486" textLength="82" lengthAdjust="spacingAndGlyphs">グラフィックスタイル</text>
<use href="#circ" x="1264" y="484.300"/>
<rect x="1069.500" y="495.500" width="15.500" height="14" fill="#fff" stroke="#222"/>
<text x="1089" y="507" textLength="46" lengthAdjust="spacingAndGlyphs" style="font-weight:bold">選択なし</text>
<path d="M1067 511.500h191" stroke="#000"/>
<text x="1089" y="527" textLength="14" lengthAdjust="spacingAndGlyphs">線:</text>
<rect x="1131" y="516" width="12.500" height="13" fill="#000" stroke="#000"/><rect x="1132" y="517" width="10.500" height="11" fill="#000" stroke="#fff"/>
<text x="1154" y="527" textLength="55" lengthAdjust="spacingAndGlyphs">0.353 mm</text>
<path d="M1067 532.500h191M1067 552.500h191" stroke="#fff"/>
<text x="1089" y="547" textLength="23" lengthAdjust="spacingAndGlyphs">塗り:</text>
<rect x="1131" y="536" width="12.500" height="13" fill="#fff" stroke="#000"/><rect x="1132.500" y="537.500" width="9.500" height="10" fill="#fff" stroke="#000"/>
<text x="1089" y="567" textLength="82" lengthAdjust="spacingAndGlyphs">初期設定の透明</text>
<path d="M1067 571.500h191M1067 591.500h191" stroke="#000"/>
<rect x="1259.500" y="493" width="13.500" height="98" fill="#f6f5ec"/>
<rect x="1260" y="495" width="12.500" height="13" fill="#efefe6"/><path d="M1262.500 503l3.500-3.500 3.500 3.500" fill="none" stroke="#c8c7bc" stroke-width="1.800"/>
<rect x="1260" y="578" width="12.500" height="13" fill="#efefe6"/><path d="M1262.500 583l3.500 3.500 3.500-3.500" fill="none" stroke="#c8c7bc" stroke-width="1.800"/>
<rect x="1098.500" y="593.500" width="29" height="12" rx="3" fill="#dedccd" stroke="#8f8d80"/>
<circle cx="1108" cy="599.500" r="4" fill="#777" stroke="#222"/><circle cx="1113" cy="599.500" r="4" fill="#ddd" stroke="#222"/><circle cx="1117.500" cy="599.500" r="4" fill="#fff" stroke="#222"/>
<circle cx="1147.500" cy="600" r="4" fill="#fff" stroke="#222" stroke-width="1.400"/><path d="M1144.500 597l6 6" stroke="#222" stroke-width="1.400"/>
<circle cx="1171.500" cy="600" r="4" fill="#bbb" stroke="#555"/><path d="M1177 598l3 2-3 2z" fill="#333"/><circle cx="1185.500" cy="600" r="4" fill="#fff" stroke="#555"/>
<rect x="1208" y="596" width="10" height="9" fill="#fff" stroke="#555"/><rect x="1212" y="600" width="5" height="4" fill="#555"/>
<rect x="1239" y="597" width="8" height="9" fill="#ddd" stroke="#555"/><path d="M1238 596h10M1241.500 597v9M1244 597v9" stroke="#555"/>

<!-- layers -->
<rect x="1067.500" y="611.500" width="205.500" height="115" fill="#ece9d8"/><rect x="1067.500" y="611.500" width="205.500" height="17" fill="#a8a698"/>
<path d="M1070 628.500V614Q1070 612 1073 612H1115C1122 612 1124 628.500 1133 628.500z" fill="#ece9d8"/>
<path d="M1243 628.500C1252 628.500 1253 615 1260 615H1273V628.500z" fill="#ece9d8"/>
<text x="1077" y="625" textLength="36" lengthAdjust="spacingAndGlyphs">レイヤー</text>
<use href="#circ" x="1264" y="623"/>
<rect x="1126" y="631.500" width="131.500" height="19.500" fill="#316ac5"/><path d="M1253 631.500h5v5z" fill="#fff"/>
<path d="M1067 651.500h190M1067 671.500h190M1067 691.500h190" stroke="#fff"/>
<path d="M1110.500 631v79" stroke="#000"/><path d="M1067 710.500h191" stroke="#000"/>
<g fill="#dedccd"><rect x="1067.500" y="632" width="16.500" height="19"/><rect x="1067.500" y="652" width="16.500" height="19"/><rect x="1067.500" y="672" width="16.500" height="19"/><rect x="1067.500" y="692" width="16.500" height="18"/></g>
<g fill="none" stroke="#bdbbad"><rect x="1093.500" y="634.500" width="11" height="14"/><rect x="1093.500" y="654.500" width="11" height="14"/><rect x="1093.500" y="674.500" width="11" height="14"/><rect x="1093.500" y="694.500" width="11" height="14"/></g>
<g><g fill="#222"><path d="M1070 640.500q6-6 12 0q-6 5-12 0zM1070 660.500q6-6 12 0q-6 5-12 0zM1070 680.500q6-6 12 0q-6 5-12 0zM1070 700.500q6-6 12 0q-6 5-12 0z"/></g><g fill="#bbb"><circle cx="1076" cy="640" r="1.500"/><circle cx="1076" cy="660" r="1.500"/><circle cx="1076" cy="680" r="1.500"/><circle cx="1076" cy="700" r="1.500"/></g></g>
<path d="M1115.500 655.500l6 6-6 6zM1115.500 675.500l6 6-6 6zM1115.500 695.500l6 6-6 6z" fill="#dfe7f4" stroke="#7f9db9"/>
<g fill="#fff" stroke="#000"><rect x="1131.500" y="633" width="15" height="16.500"/><rect x="1131.500" y="653" width="15" height="16"/><rect x="1131.500" y="673" width="15" height="16"/><rect x="1131.500" y="693" width="15" height="16"/></g>
<path d="M1134 656h3M1139 656h4M1135 660h7M1134 664l8 0M1134 658v5M1141 658v7" stroke="#555"/><path d="M1135 677h7v4h-5v4" stroke="#444" fill="none" stroke-width="1.500"/><path d="M1138 705v-6h3v-3h2v11h-7v-2z" fill="#222"/>
<text x="1150.500" y="645" textLength="26" lengthAdjust="spacingAndGlyphs" style="fill:#fff;font-weight:bold">文字</text>
<text x="1150.500" y="665" textLength="36" lengthAdjust="spacingAndGlyphs">既設線</text>
<text x="1150.500" y="685" textLength="36" lengthAdjust="spacingAndGlyphs">撤去線</text>
<text x="1150.500" y="705" textLength="36" lengthAdjust="spacingAndGlyphs">新設線</text>
<circle cx="1238.500" cy="640.500" r="4" fill="none" stroke="#e4ebf8" stroke-width="1.100"/>
<g fill="none" stroke="#333" stroke-width="1.100"><circle cx="1238.500" cy="660.500" r="4"/><circle cx="1238.500" cy="680.500" r="4"/><circle cx="1238.500" cy="700.500" r="4"/></g>
<rect x="1258" y="631" width="15" height="79" fill="#fafaf4"/>
<rect x="1259.500" y="632" width="12.500" height="15" fill="url(#bb)" stroke="#fff"/><path d="M1262.500 642l3.500-3.500 3.500 3.500" fill="none" stroke="#4d6185" stroke-width="1.800"/>
<rect x="1259.500" y="648" width="12.500" height="15" fill="url(#bb)" stroke="#fff"/><path d="M1263 652h6M1263 655h6M1263 658h6" stroke="#7c96cc"/>
<rect x="1259.500" y="695" width="12.500" height="14.500" fill="url(#bb)" stroke="#fff"/><path d="M1262.500 700l3.500 3.500 3.500-3.500" fill="none" stroke="#4d6185" stroke-width="1.800"/>
<text x="1076" y="722" textLength="44" lengthAdjust="spacingAndGlyphs">6レイヤー</text>
<circle cx="1150.500" cy="719" r="4" fill="#bbb" stroke="#555"/><path d="M1143 714h6v6" fill="none" stroke="#777" stroke-dasharray="1 1"/>
<path d="M1171 714v5h4" fill="none" stroke="#222"/><path d="M1174 717.500l2.500 1.500-2.500 1.500z" fill="#222"/><rect x="1177" y="715" width="8" height="8" fill="#fff" stroke="#222"/><rect x="1180" y="718" width="4" height="4" fill="#222"/>
<rect x="1206.500" y="715" width="9" height="8.500" fill="#fff" stroke="#222"/><rect x="1210" y="718.500" width="5" height="4" fill="#222"/>
<rect x="1238" y="716" width="8" height="8" fill="#ddd" stroke="#222"/><path d="M1237 715h10M1240.500 716v8M1243 716v8" stroke="#222"/>

<!-- info -->
<rect x="1064" y="726" width="209" height="18" fill="url(#tb)"/>
<use href="#min" x="1239" y="729.500" width="14" height="14"/><use href="#close" x="1256.500" y="729.500" width="14" height="14"/>
<rect x="1067.500" y="744" width="205.500" height="119" fill="#ece9d8"/><rect x="1067.500" y="744" width="205.500" height="17" fill="#a8a698"/>
<path d="M1127 761V748Q1127 746 1130 746H1165C1172 746 1174 761 1182 761z" fill="#ece9d8"/>
<path d="M1243 761C1252 761 1253 748 1260 748H1273V761z" fill="#ece9d8"/>
<path d="M1071.500 747v14" stroke="#666"/>
<text class="i" x="1076" y="758" textLength="46" lengthAdjust="spacingAndGlyphs">ナビゲータ</text>
<path d="M1133 753L1135.500 750 1138 753zM1133 755L1135.500 758 1138 755z" fill="#333"/>
<text x="1140" y="758" textLength="25" lengthAdjust="spacingAndGlyphs">情報</text>
<use href="#circ" x="1264" y="756"/>
<path d="M1078 776.500h10M1082.700 771.500v10" stroke="#000" stroke-width="1.100"/>
<text x="1096" y="773" textLength="6" lengthAdjust="spacingAndGlyphs" style="font-size:10px">X</text><text x="1108" y="777" textLength="51" lengthAdjust="spacingAndGlyphs">:236.361</text>
<text x="1096" y="785" textLength="6" lengthAdjust="spacingAndGlyphs" style="font-size:10px">Y</text><text x="1108" y="789" textLength="54" lengthAdjust="spacingAndGlyphs">:-165.708</text>
<path d="M1170.500 765v23M1170.500 794v14M1170.500 814v47" stroke="#a8a698"/>
<path d="M1182 772h9v9M1182 772v8h8" fill="none" stroke="#000" stroke-dasharray="1 1"/><path d="M1181 781l2-1M1191 771l-1 2" stroke="#000"/>
<text x="1198" y="773" textLength="9" lengthAdjust="spacingAndGlyphs" style="font-size:10px">W</text><text x="1212" y="777" textLength="35" lengthAdjust="spacingAndGlyphs">:0 mm</text>
<text x="1199" y="785" textLength="7" lengthAdjust="spacingAndGlyphs" style="font-size:10px">H</text><text x="1212" y="789" textLength="35" lengthAdjust="spacingAndGlyphs">:0 mm</text>
<path d="M1071 790.500h198M1071 810.500h198" stroke="#a8a698"/>
<text x="1098.500" y="822" textLength="6" lengthAdjust="spacingAndGlyphs" style="font-size:10px">R</text><text x="1108" y="825" textLength="25" lengthAdjust="spacingAndGlyphs">:255</text>
<text x="1098" y="834" textLength="6.500" lengthAdjust="spacingAndGlyphs" style="font-size:10px">G</text><text x="1108" y="837" textLength="25" lengthAdjust="spacingAndGlyphs">:255</text>
<text x="1098.500" y="846" textLength="6" lengthAdjust="spacingAndGlyphs" style="font-size:10px">B</text><text x="1108" y="849" textLength="25" lengthAdjust="spacingAndGlyphs">:255</text>
<text x="1087.500" y="858" textLength="17" lengthAdjust="spacingAndGlyphs" style="font-size:10px">Hex</text><text x="1108" y="861" textLength="40" lengthAdjust="spacingAndGlyphs">:FFFFFF</text>
<rect x="1079.500" y="830.500" width="6" height="6" fill="#fff" stroke="#000"/>
<rect x="1183" y="830" width="7" height="7" fill="#000"/><rect x="1185" y="832" width="3" height="3" fill="#fff"/>
<text x="1202.500" y="822" textLength="6" lengthAdjust="spacingAndGlyphs" style="font-size:10px">R</text><text x="1212" y="825" textLength="11" lengthAdjust="spacingAndGlyphs">:0</text>
<text x="1202" y="834" textLength="6.500" lengthAdjust="spacingAndGlyphs" style="font-size:10px">G</text><text x="1212" y="837" textLength="11" lengthAdjust="spacingAndGlyphs">:0</text>
<text x="1202.500" y="846" textLength="6" lengthAdjust="spacingAndGlyphs" style="font-size:10px">B</text><text x="1212" y="849" textLength="11" lengthAdjust="spacingAndGlyphs">:0</text>
<text x="1191.500" y="858" textLength="17" lengthAdjust="spacingAndGlyphs" style="font-size:10px">Hex</text><text x="1212" y="861" textLength="46" lengthAdjust="spacingAndGlyphs">:000000</text>

<!-- align -->
<rect x="1064" y="863" width="209" height="18" fill="url(#tb)"/>
<use href="#min" x="1239" y="866" width="14" height="14"/><use href="#close" x="1256.500" y="866" width="14" height="14"/>
<rect x="1067.500" y="881" width="205.500" height="94" fill="#ece9d8"/><rect x="1067.500" y="881" width="205.500" height="17" fill="#a8a698"/>
<path d="M1106 898V885Q1106 883 1109 883H1147C1153 883 1155 898 1163 898z" fill="#ece9d8"/>
<path d="M1243 898C1252 898 1253 885 1260 885H1273V898z" fill="#ece9d8"/>
<path d="M1071.500 884v14" stroke="#666"/>
<text class="i" x="1075" y="895" textLength="24" lengthAdjust="spacingAndGlyphs">変形</text>
<path d="M1110 890L1112.500 887 1115 890zM1110 892L1112.500 895 1115 892z" fill="#333"/>
<text x="1118" y="895" textLength="25" lengthAdjust="spacingAndGlyphs">整列</text>
<text class="i" x="1156.500" y="895" textLength="60" lengthAdjust="spacingAndGlyphs">パスファインダ</text>
<path d="M1221 885l6 13" stroke="#95938a"/>
<use href="#circ" x="1264" y="893.300"/>
<text x="1070" y="913" textLength="87" lengthAdjust="spacingAndGlyphs">オブジェクトの整列:</text>
<g stroke="#000"><path d="M1078.500 918v14M1120 919h1M1119 919v12M1160.500 918v14M1178 918.500h16M1209 925h17M1247 932.500h16"/></g>
<g fill="#ddd" stroke="#333" stroke-width=".8"><rect x="1079" y="919" width="7" height="5"/><rect x="1079" y="926" width="14" height="5"/><rect x="1115" y="919" width="8" height="5"/><rect x="1112" y="926" width="14" height="5"/><rect x="1153" y="919" width="7" height="5"/><rect x="1146" y="926" width="14" height="5"/><rect x="1180" y="919" width="5" height="12"/><rect x="1187" y="919" width="5" height="6"/><rect x="1214" y="919" width="5" height="12"/><rect x="1222" y="922" width="5" height="6"/><rect x="1248" y="920" width="5" height="12"/><rect x="1255" y="926" width="5" height="6"/></g>
<path d="M1068 937.500h205" stroke="#fff"/>
<g stroke="#000"><path d="M1076 967h16M1114 967h16M1146 967h16M1186 956v10M1221 954v14M1216 961h10M1249 954v14M1254 954v14"/></g>
<g fill="#ddd" stroke="#333" stroke-width=".8"><rect x="1078" y="961" width="12" height="5"/><rect x="1115" y="961" width="12" height="5"/><rect x="1147" y="961" width="12" height="5"/><rect x="1182" y="959" width="3" height="8"/><rect x="1187" y="959" width="3" height="8"/><rect x="1217" y="957" width="3" height="9"/><rect x="1222" y="957" width="3" height="9"/><rect x="1245" y="957" width="4" height="9"/><rect x="1255" y="957" width="4" height="9"/></g>

<!-- language bar -->
<rect x="968" y="938.500" width="239" height="25" fill="url(#lang)"/>
<g fill="#1a3fa8"><rect x="971" y="944" width="2" height="2"/><rect x="973" y="948" width="2" height="2"/><rect x="971" y="952" width="2" height="2"/><rect x="973" y="956" width="2" height="2"/></g>
<rect x="981.500" y="950" width="15" height="8" fill="#eee" stroke="#111"/><path d="M983 952h12M983 954h12M985 956h8" stroke="#555"/><path d="M984 948h10" stroke="#ddd" stroke-dasharray="1 1"/>
<circle cx="1007" cy="949" r="6.200" fill="#d81030"/><circle cx="1005" cy="947" r="1.500" fill="#ff8898"/><path d="M1014 943l2 13" stroke="#eee" stroke-width="1.400"/><path d="M1010 954l3 6-5 1z" fill="#fff" stroke="#333" stroke-width=".7"/>
<text x="1030" y="958" textLength="8" lengthAdjust="spacingAndGlyphs" style="fill:#fff;font-size:16px">A</text>
<text x="1041.500" y="958" textLength="15" lengthAdjust="spacingAndGlyphs" style="fill:#fff;font-size:16px">般</text>
<circle cx="1072" cy="947" r="4" fill="#cfe0f8" stroke="#222"/><path d="M1062 951l10 2-2 6-9-1z" fill="#e8d070" stroke="#333" stroke-width=".7"/><path d="M1065 945v6M1068 944l-1 7" stroke="#d03030"/>
<path d="M1082 951l9-4 6 2v5l-10 5-5-2z" fill="#d8a8c0" stroke="#333" stroke-width=".7"/><path d="M1082 951l5 2 10-4M1087 953v6" stroke="#444" fill="none" stroke-width=".6"/>
<path d="M1106 960c-2-2 0-4 2-3l5-6" fill="none" stroke="#111"/><path d="M1112 949l3-3 2 2-3 3z" fill="#ddd" stroke="#111"/>
<rect x="1124.500" y="944" width="14.500" height="13" fill="#fff" stroke="#111"/><rect x="1124.500" y="944" width="14.500" height="2.500" fill="#1a3fa8"/><path d="M1127 955l7-6" stroke="#222"/><path d="M1127 949h5M1127 951h3" stroke="#444"/>
<rect x="1146.500" y="944" width="12" height="13" fill="#ffe860" stroke="#111"/><text x="1149.500" y="955" style="font-size:11px;font-weight:bold;fill:#1a2a9a">?</text>
<text x="1169" y="946.500" textLength="19" lengthAdjust="spacingAndGlyphs" style="fill:#fff;font-size:8px">CAPS</text>
<text x="1169" y="958.500" textLength="19" lengthAdjust="spacingAndGlyphs" style="fill:#fff;font-size:8px">KANA</text>
<rect x="1196" y="946" width="5" height="2" fill="#fff"/><path d="M1196 955.500h5l-2.500 3z" fill="#fff"/>
</svg>
</body></html>
